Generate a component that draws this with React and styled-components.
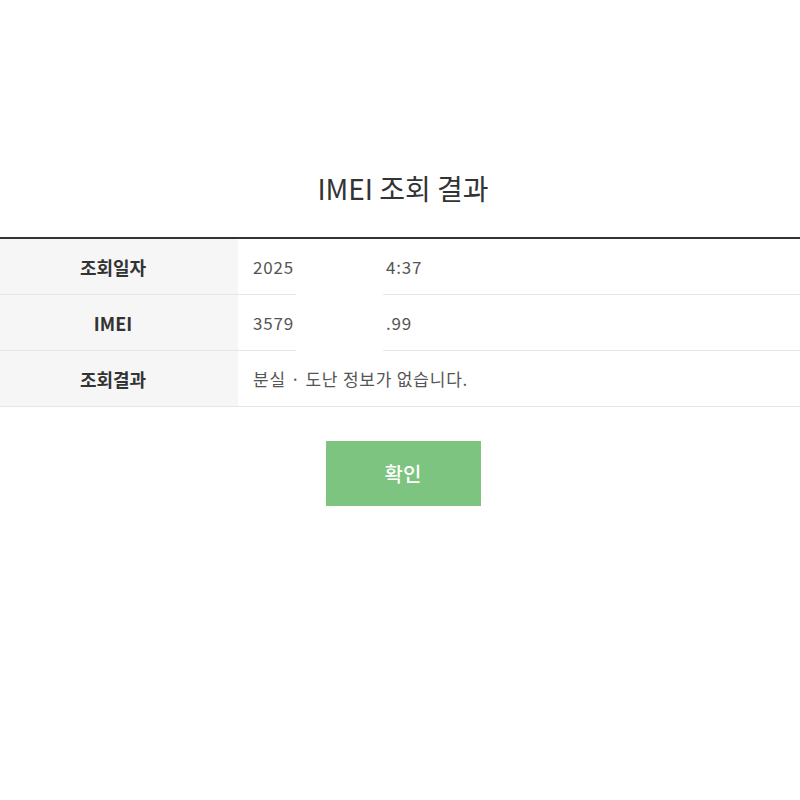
import React from 'react';
import styled, { createGlobalStyle } from 'styled-components';

// head / tail: the middle of the value is blanked out in the screenshot
const rows = [
  { label: '조회일자', head: '2025', tail: '4:37', masked: true },
  { label: 'IMEI', head: '3579', tail: '.99', masked: true },
  { label: '조회결과', head: '분실 · 도난 정보가 없습니다.' },
];

const App = () => {
  return (
    <Page>
      <GlobalStyle />
      <Title>IMEI 조회 결과</Title>
      <TableWrap>
        <Table>
          {rows.map((row) => (
            <Row key={row.label}>
              <Label>{row.label}</Label>
              {row.masked ? (
                <Value>
                  <Head>{row.head}</Head>
                  <Tail>{row.tail}</Tail>
                </Value>
              ) : (
                <Value>{row.head}</Value>
              )}
            </Row>
          ))}
        </Table>
        <Redact />
      </TableWrap>
      <ButtonRow>
        <ConfirmButton>확인</ConfirmButton>
      </ButtonRow>
    </Page>
  );
};

const GlobalStyle = createGlobalStyle`
  html, body {
    margin: 0;
    background: #fff;
    font-family: "Noto Sans CJK KR", "Noto Sans", sans-serif;
  }
`;

const Page = styled.div`
  width: 800px;
  height: 800px;
  padding-top: 167px;
  box-sizing: border-box;
  overflow: hidden;
`;

const Title = styled.h2`
  margin: 0 0 0 6px;
  text-align: center;
  font-size: 28px;
  font-weight: 400;
  color: #333;
  line-height: 42px;
`;

const TableWrap = styled.div`
  position: relative;
  margin-top: 28px;
`;

const Table = styled.div`
  border-top: 2px solid #333;
`;

const Row = styled.div`
  display: grid;
  grid-template-columns: 238px 1fr;
  height: 56px;
  box-sizing: border-box;
  border-bottom: 1px solid #e6e6e6;
`;

const Label = styled.div`
  display: flex;
  align-items: center;
  justify-content: center;
  padding-right: 12px;
  background: #f6f6f6;
  font-size: 18px;
  font-weight: 700;
  color: #333;
`;

const Value = styled.div`
  display: flex;
  align-items: center;
  padding-left: 15px;
  font-size: 17px;
  letter-spacing: 0.8px;
  color: #555;
`;

const Head = styled.span`
  width: 43px;
  white-space: nowrap;
`;

const Tail = styled.span`
  margin-left: 90px;
`;

const Redact = styled.div`
  position: absolute;
  left: 296px;
  top: 12px;
  width: 87px;
  height: 106px;
  background: #fff;
`;

const ButtonRow = styled.div`
  display: flex;
  justify-content: center;
  margin-top: 34px;
  padding-left: 6px;
`;

const ConfirmButton = styled.button`
  width: 155px;
  height: 65px;
  border: none;
  background: #7cc47f;
  color: #fff;
  font-family: "Noto Sans CJK KR", sans-serif;
  font-size: 20px;
  font-weight: 500;
  cursor: pointer;
`;

export default App;
